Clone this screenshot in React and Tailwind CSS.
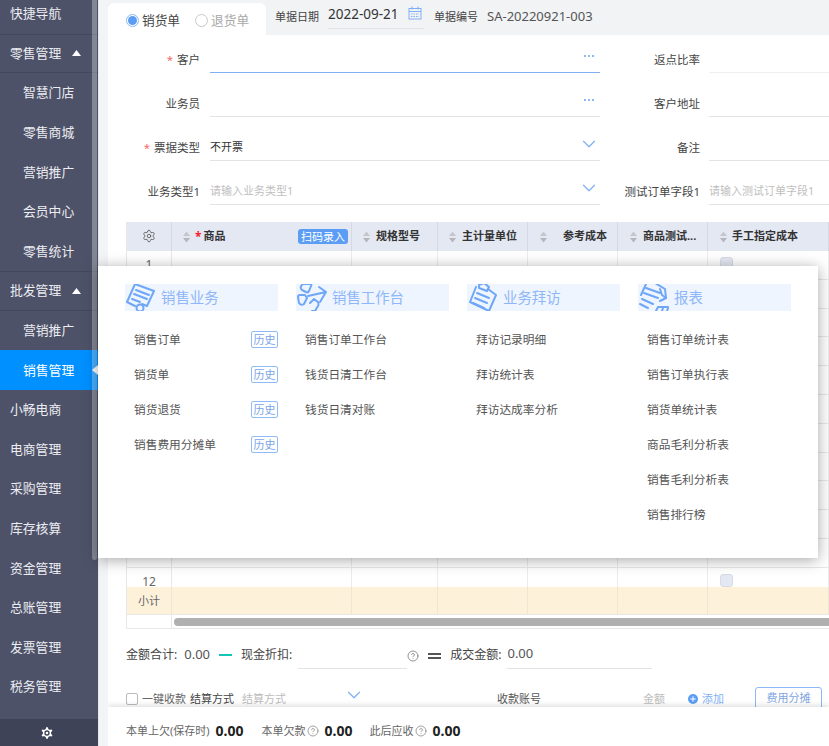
import React from 'react';
import { Settings, ChevronDown, CircleHelp, Plus } from 'lucide-react';

const menuTop = [
  { label: '快捷导航' },
  { label: '零售管理', open: true },
  { label: '智慧门店', sub: true },
  { label: '零售商城', sub: true },
  { label: '营销推广', sub: true },
  { label: '会员中心', sub: true },
  { label: '零售统计', sub: true },
  { label: '批发管理', open: true },
  { label: '营销推广', sub: true },
  { label: '销售管理', sub: true, active: true },
  { label: '小畅电商' },
  { label: '电商管理' },
  { label: '采购管理' },
  { label: '库存核算' },
  { label: '资金管理' },
  { label: '总账管理' },
  { label: '发票管理' },
  { label: '税务管理' },
];

const columns = [
  {
    title: '销售业务',
    icon: 'receipt',
    items: ['销售订单', '销货单', '销货退货', '销售费用分摊单'],
    history: true,
  },
  { title: '销售工作台', icon: 'desk', items: ['销售订单工作台', '钱货日清工作台', '钱货日清对账'] },
  { title: '业务拜访', icon: 'clip', items: ['拜访记录明细', '拜访统计表', '拜访达成率分析'] },
  {
    title: '报表',
    icon: 'report',
    items: ['销售订单统计表', '销售订单执行表', '销货单统计表', '商品毛利分析表', '销售毛利分析表', '销售排行榜'],
  },
];

const tableCols = 'grid grid-cols-[45px_180px_86px_90px_90px_90px_121px_60px]';

const SortArrows = () => (
  <svg width="7" height="12" viewBox="0 0 7 12" className="shrink-0">
    <path d="M3.5 0.5 7 5H0Z" fill="#c4c6cc" />
    <path d="M3.5 11.5 0 7h7Z" fill="#b4b6bc" />
  </svg>
);

const SectionIcon = ({ type }) => {
  const common = { fill: 'none', stroke: '#6fa6f8', strokeWidth: 2, strokeLinecap: 'round', strokeLinejoin: 'round' };
  return (
    <svg width="32" height="32" viewBox="0 0 32 32" className="absolute left-0 top-[-3px]" {...common}>
      {type === 'receipt' && (
        <>
          <path d="M10 3 29 10 22 25 17 23M10 25 2 21 10 3" />
          <path d="M11 9 24 14M9 13 22 18M7 18 15 21" />
          <circle cx="15" cy="27" r="3.5" />
        </>
      )}
      {type === 'desk' && (
        <>
          <path d="M7 3h7q2 0 1 2l-2 5q-1 2-3 1L6 9Q3 6 7 3Z" />
          <path d="M2 16q0-2 2-2h5l2 3-3 6q-3 2-5-1Z" />
          <path d="M14 22l4-4 4 3q1 2 0 4l-3 5h-3" />
          <path d="M12 15 30 11 24 21M23 6l7 5" />
        </>
      )}
      {type === 'clip' && (
        <>
          <path d="M9 6 3 21 22 30 29 14 21 8" />
          <path d="M12 4 17 2 22 6 20 10 12 7Z" />
          <path d="M10 12 22 17M8 17 20 22M6 22 17 27" />
        </>
      )}
      {type === 'report' && (
        <>
          <path d="M8 3 3 14M17 2 27 8 28 17" />
          <path d="M8 7 22 12M6 12 20 17M4 18 15 23M2 23 10 27" />
          <path d="M22 8 24 14 28 17 22 20" />
          <path d="M18 30 20 26h10M24 30l1-3M29 30l1-3" />
        </>
      )}
    </svg>
  );
};

const Underline = ({ className, children }) => (
  <div className={`flex items-end border-b ${className}`}>{children}</div>
);

const Dots = () => (
  <span className="mb-[15px] ml-auto mr-[6px] flex gap-[2px]">
    <i className="h-[2px] w-[2px] bg-[#8db7f5]" />
    <i className="h-[2px] w-[2px] bg-[#8db7f5]" />
    <i className="h-[2px] w-[2px] bg-[#8db7f5]" />
  </span>
);

const Chevron = () => <ChevronDown size={22} strokeWidth={1.3} className="mb-[5px] ml-auto text-[#7fb0f5]" />;

const FormRow = ({ height, blue, star, label, value, placeholder, tail, rightLabel, rightPlaceholder, rightLine }) => (
  <div className={`flex items-stretch text-[11.5px] ${height}`}>
    <div className="flex w-[92px] items-end justify-end whitespace-nowrap pb-[5px] leading-4 text-[#444]">
      {star && <span className="mr-[4px] text-[#f56c6c]">*</span>}
      {label}
    </div>
    <Underline className={`ml-[10px] w-[390px] ${blue ? 'border-[#7fb0f5]' : 'border-[#e2e3e6]'}`}>
      <span className={`pb-[5px] leading-4 ${placeholder ? 'text-[11px] text-[#c0c0c0]' : 'text-[11px] text-[#333]'}`}>{value || placeholder}</span>
      {tail}
    </Underline>
    <div className="flex w-[100px] items-end justify-end whitespace-nowrap pb-[5px] leading-4 text-[#444]">{rightLabel}</div>
    <Underline className={`ml-[9px] flex-1 overflow-hidden ${rightLine || 'border-[#e2e3e6]'}`}>
      <span className="whitespace-nowrap pb-[5px] text-[11px] leading-4 text-[#c0c0c0]">{rightPlaceholder}</span>
    </Underline>
  </div>
);

const HeadCell = ({ pad, children }) => (
  <div className={`flex h-full items-center border-r border-[#d6d9e2] text-[11px] font-bold text-[#333] ${pad}`}>
    <SortArrows />
    {children}
  </div>
);

export default function App() {
  return (
    <div className="relative flex h-[746px] w-[829px] overflow-hidden bg-[#f3f4f6] font-['Noto_Sans','Noto_Sans_CJK_SC',sans-serif] text-xs">
      {/* left menu */}
      <aside className="relative flex w-[99px] shrink-0 flex-col overflow-hidden border-r border-[#e6e7eb] bg-[#4e5268] text-[12.8px] text-[#ecedf2]">
        <nav className="mt-[-6px] flex-1 overflow-hidden">
          {menuTop.map((m, i) => (
            <div
              key={i}
              className={`flex h-[39.6px] items-center ${m.sub ? 'pl-[23px]' : 'pl-[10px]'} ${m.open ? 'border-y border-[#43475b]' : ''} ${m.active ? 'bg-[#0090ff] text-white' : ''}`}
            >
              {m.label}
              {m.open && (
                <svg width="9" height="6" viewBox="0 0 9 6" className="ml-[11px]">
                  <path d="M4.5 0 9 6H0Z" fill="#fff" />
                </svg>
              )}
            </div>
          ))}
        </nav>
        <div className="flex h-[27px] shrink-0 items-center justify-center bg-[#3f4358] pr-[4px]">
          <Settings size={16} fill="#fff" color="#3f4358" strokeWidth={2} />
        </div>
        <div className="absolute left-[92px] top-0 h-[560px] w-[5px] rounded-b bg-white/30" />
        <svg width="6" height="10" viewBox="0 0 6 10" className="absolute left-[92px] top-[365px]">
          <path d="M0 5 6 0V10Z" fill="#fff" />
        </svg>
      </aside>

      <main className="relative ml-[9px] flex-1 overflow-hidden bg-white text-[#444]">
        {/* top bar */}
        <div className="flex h-[35px] items-stretch bg-[#f2f3f5]">
          <div className="mt-[3px] flex w-[158px] items-center rounded-t-md bg-white pl-[18px] pt-[2px] text-[12.7px]">
            <span className="flex h-[13px] w-[13px] items-center justify-center rounded-full border border-[#8db7f5]">
              <i className="h-[9px] w-[9px] rounded-full bg-[#5b9df5]" />
            </span>
            <span className="ml-[3px] text-[#444]">销货单</span>
            <span className="ml-[15px] h-[13px] w-[13px] rounded-full border border-[#c8c8c8]" />
            <span className="ml-[3px] text-[#a8a8a8]">退货单</span>
          </div>
          <span className="ml-[9px] self-center pb-[1px] text-[11px]">单据日期</span>
          <div className="ml-[9px] flex h-[29px] w-[96px] items-center border-b border-[#e2e3e6] text-[13.5px] text-[#333]">
            2022-09-21
            <svg width="14" height="14" viewBox="0 0 14 14" className="mb-[2px] ml-[10px]" fill="none" stroke="#7fb0f5">
              <rect x="1" y="2.5" width="12" height="10.5" />
              <path d="M1 5.5h12M4 0.5v3M10 0.5v3" />
              <path d="M3 8h8M3 10.5h8" strokeDasharray="1.5 1" />
            </svg>
          </div>
          <span className="ml-[10px] self-center pb-[1px] text-[11px]">单据编号</span>
          <span className="ml-[9px] self-center pb-[1px] text-[13px] text-[#555]">SA-20220921-003</span>
        </div>

        {/* form */}
        <div>
          <FormRow height="h-[38px]" blue star label="客户" tail={<Dots />} rightLabel="返点比率" rightLine="border-[#f0f0f0]" />
          <FormRow height="h-[44px]" label="业务员" tail={<Dots />} rightLabel="客户地址" />
          <FormRow height="h-[44px]" star label="票据类型" value="不开票" tail={<Chevron />} rightLabel="备注" />
          <FormRow
            height="h-[44px]"
            label="业务类型1"
            placeholder="请输入业务类型1"
            tail={<Chevron />}
            rightLabel="测试订单字段1"
            rightPlaceholder="请输入测试订单字段1"
          />
        </div>

        {/* table */}
        <div className="ml-[18px] mt-[17px] w-[730px] border-l border-[#e8e8e8]">
          <div className={`${tableCols} h-[29px] bg-[#e4e8f3]`}>
            <div className="flex items-center justify-center border-r border-[#d6d9e2] pb-[1px]">
              <Settings size={14} strokeWidth={1.4} className="text-[#555]" />
            </div>
            <HeadCell pad="pl-[11px]">
              <span className="ml-[5px] text-xs text-[#f5222d]">*</span>
              <span className="ml-[2px]">商品</span>
              <span className="ml-auto mr-[3px] rounded-[3px] bg-[#5b9df5] px-[3px] py-[1px] font-normal leading-[13px] text-white">扫码录入</span>
            </HeadCell>
            <HeadCell pad="pl-[11px]"><span className="ml-[6px]">规格型号</span></HeadCell>
            <HeadCell pad="pl-[11px]"><span className="ml-[6px]">主计量单位</span></HeadCell>
            <HeadCell pad="pl-[12px]"><span className="ml-[16px]">参考成本</span></HeadCell>
            <HeadCell pad="pl-[12px]"><span className="ml-[6px]">商品测试...</span></HeadCell>
            <HeadCell pad="pl-[12px]"><span className="ml-[5px]">手工指定成本</span></HeadCell>
            <div />
          </div>
          <div className="h-[336px]">
            {Array.from({ length: 12 }, (_, i) => (
              <div key={i} className={`${tableCols} ${i === 11 ? 'h-[19.2px]' : 'h-[28.8px] border-b border-[#e8e8e8]'}`}>
                <div className="flex items-start justify-center border-r border-[#e8e8e8] pt-[8px] leading-[11px] text-[#666]">
                  {(i === 0 || i === 11) && i + 1}
                </div>
                <div className="border-r border-[#ececec]" />
                <div className="border-r border-[#ececec]" />
                <div className="border-r border-[#ececec]" />
                <div className="border-r border-[#ececec]" />
                <div className="border-r border-[#ececec]" />
                <div className="border-r border-[#ececec] pl-[12px] pt-[6px]">
                  <div className="h-[13px] w-[13px] rounded-[3px] border border-[#d8dbe6] bg-[#e4e8f3]" />
                </div>
                <div />
              </div>
            ))}
          </div>
          <div className={`${tableCols} h-[28px] border-b border-[#e8e8e8] bg-[#fdf1da]`}>
            <div className="flex items-center justify-center border-r border-[#efe6d4] pt-[1px] text-[11px] text-[#666]">小计</div>
            <div className="border-r border-[#efe6d4]" />
            <div className="border-r border-[#efe6d4]" />
            <div className="border-r border-[#efe6d4]" />
            <div className="border-r border-[#efe6d4]" />
            <div className="border-r border-[#efe6d4]" />
            <div className="border-r border-[#efe6d4]" />
            <div />
          </div>
          <div className="flex h-[14px] items-center border-b border-[#e8e8e8]">
            <div className="h-full w-[45px] shrink-0 border-r border-[#e8e8e8]" />
            <div className="ml-[2px] h-[8px] flex-1 rounded-l-full bg-[#b0b0b0]" />
          </div>
        </div>

        {/* totals */}
        <div className="flex h-[40px] items-end pl-[18px]">
          <span className="pb-[5px] leading-[18px]">金额合计:</span>
          <span className="ml-[7px] pb-[6px] text-[13px] leading-[18px] text-[#555]">0.00</span>
          <i className="mb-[13px] ml-[9px] h-[2px] w-[13px] bg-[#12c6b6]" />
          <span className="ml-[9px] pb-[5px] leading-[18px]">现金折扣:</span>
          <div className="ml-[6px] h-full w-[109px] border-b border-[#e2e3e6]" />
          <CircleHelp size={12} strokeWidth={1.4} className="mb-[7px] text-[#666]" />
          <span className="mb-[10px] ml-[9px] h-[6px] w-[13px] border-y-2 border-[#555]" />
          <span className="ml-[9px] pb-[5px] leading-[18px]">成交金额:</span>
          <div className="ml-[6px] flex h-full w-[145px] items-end border-b border-[#e2e3e6] pb-[6px] text-[13px] leading-[18px] text-[#555]">0.00</div>
        </div>

        {/* settlement */}
        <div className="flex h-[38px] items-start overflow-hidden pl-[18px] pt-[20px] text-[11px]">
          <span className="mt-[4px] h-[12px] w-[12px] rounded-[2px] border border-[#bbb]" />
          <span className="ml-[4px] leading-5 text-[#666]">一键收款</span>
          <span className="ml-[4px] leading-5">结算方式</span>
          <span className="ml-[8px] leading-5 text-[#bdbdbd]">结算方式</span>
          <ChevronDown size={22} strokeWidth={1.3} className="ml-[57px] mt-[-5px] text-[#7fb0f5]" />
          <span className="ml-[132px] leading-5 text-[#555]">收款账号</span>
          <span className="ml-[102px] leading-5 text-[#bdbdbd]">金额</span>
          <span className="ml-[23px] mt-[5px] flex h-[10px] w-[10px] items-center justify-center rounded-full bg-[#5b9df5]">
            <Plus size={8} strokeWidth={3} className="text-white" />
          </span>
          <span className="ml-[4px] leading-5 text-[#7fb0f5]">添加</span>
          <span className="ml-[31px] mt-[-2px] h-[30px] w-[67px] shrink-0 rounded-[3px] border border-[#8db7f5] pt-[3px] text-center text-[#7fa6e0]">费用分摊</span>
        </div>

        {/* footer */}
        <div className="relative flex h-[39px] items-center bg-white pl-[18px] pt-[9px] text-[11px] shadow-[0_-2px_5px_rgba(0,0,0,0.12)]">
          <span className="text-[#666]">本单上欠(保存时)</span>
          <b className="ml-[6px] text-sm text-[#222]">0.00</b>
          <span className="ml-[18px] text-[#666]">本单欠款</span>
          <CircleHelp size={12} strokeWidth={1.2} className="ml-[1px] text-[#666]" />
          <b className="ml-[6px] text-sm text-[#222]">0.00</b>
          <span className="ml-[17px] text-[#666]">此后应收</span>
          <CircleHelp size={12} strokeWidth={1.2} className="ml-[1px] text-[#666]" />
          <b className="ml-[6px] text-sm text-[#222]">0.00</b>
        </div>
      </main>

      {/* flyout menu */}
      <div className="absolute left-[98px] top-[266px] flex h-[292px] w-[720px] gap-[18px] bg-white pl-[27px] pt-[18px] shadow-[0_2px_14px_rgba(0,0,0,0.35)]">
        {columns.map((col) => (
          <div key={col.title} className="w-[153px]">
            <div className="relative h-[27px] overflow-hidden bg-[#eef5ff] pl-[36px] text-[14.4px] leading-[27px] text-[#8fb6f8]">
              <SectionIcon type={col.icon} />
              {col.title}
            </div>
            <div className="mt-[11px]">
              {col.items.map((item) => (
                <div key={item} className="flex h-[35px] items-center pl-[9px] text-[11.7px] text-[#555]">
                  {item}
                  {col.history && (
                    <span className="ml-auto rounded-[2px] border border-[#8fbcf9] px-[1.5px] text-[11px] leading-[15px] text-[#7aa5e6]">历史</span>
                  )}
                </div>
              ))}
            </div>
          </div>
        ))}
      </div>
    </div>
  );
}
